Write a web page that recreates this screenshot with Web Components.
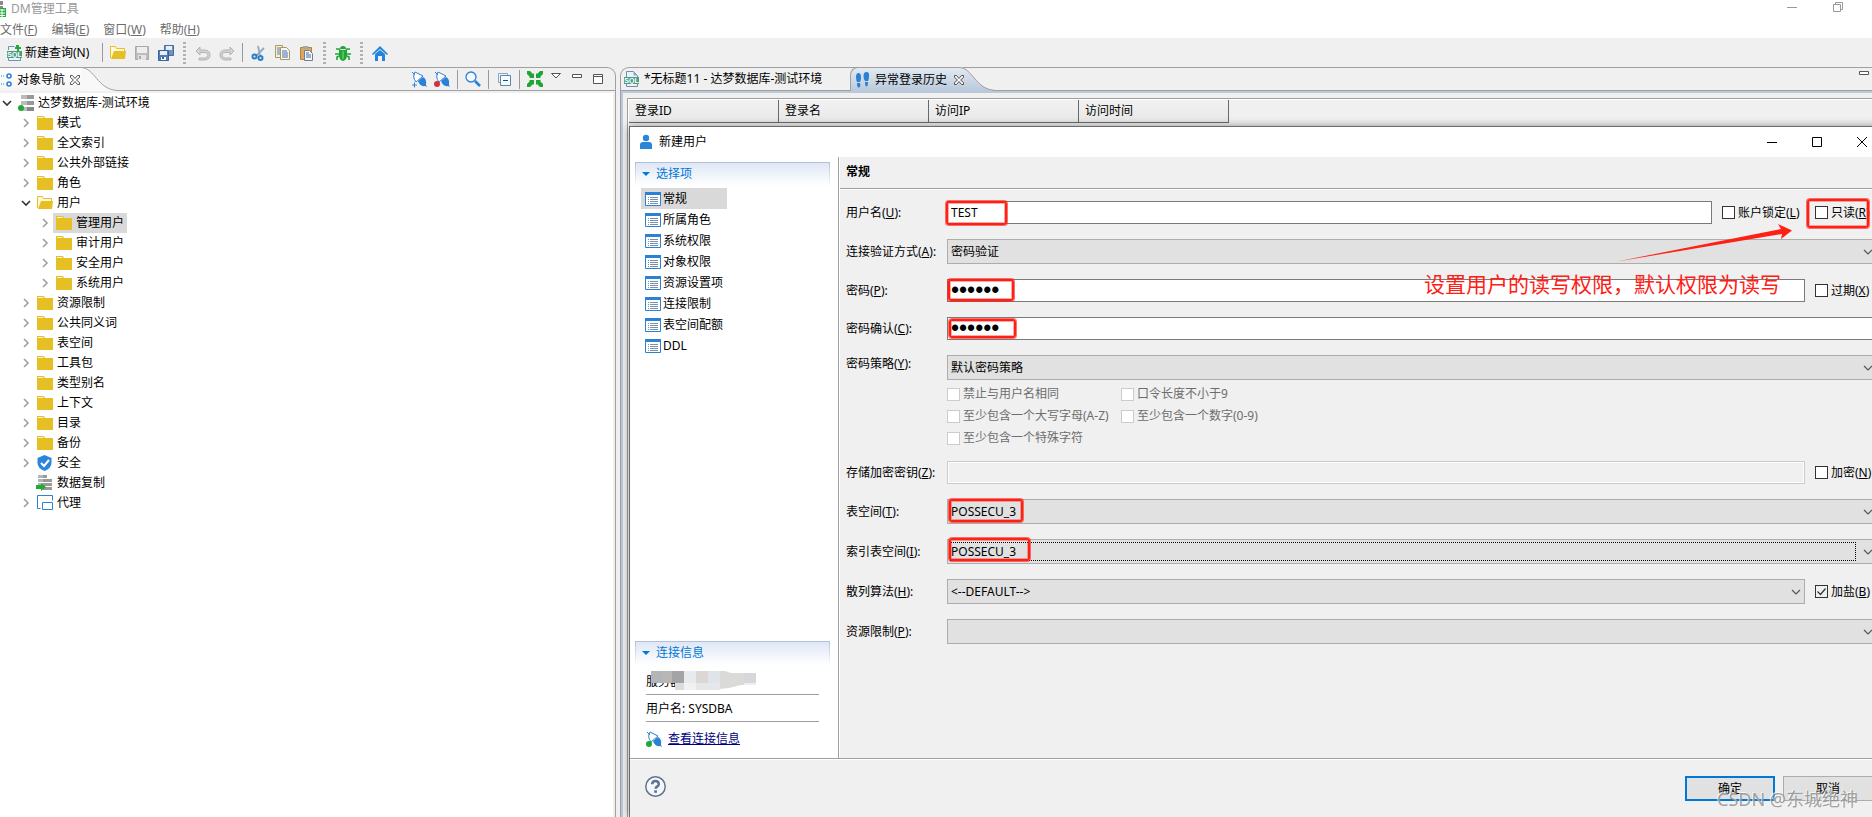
<!DOCTYPE html>
<html lang="zh-CN">
<head>
<meta charset="utf-8">
<title>DM管理工具</title>
<style>
html,body{margin:0;height:100%;overflow:hidden}
body{font:12px/16px "Noto Sans","Noto Sans CJK SC",sans-serif;color:#000;background:#f0f0f0}
</style>
</head>
<body>
<dm-app></dm-app>
<script>
const ICONS={
server:'<rect x="3" y="0" width="13" height="4" fill="#999"/><rect x="3" y="6" width="13" height="4" fill="#999"/><rect x="3" y="12" width="13" height="4" fill="#888"/><path d="M3 0h6v4H3zM3 6h6v4H3zM3 12h6v4H3z" fill="#bbb"/><circle cx="3" cy="13" r="3" fill="#22a834"/>',
applogo:'<path d="M6 0h7v4H6zM6 5h7v3H6z" fill="#8a8a8a"/><path d="M7 7h9v9H7z" fill="#27ae3c"/><path d="M8 9h7M8 12h7M8 14.500h7M12 8v8" stroke="#fff"/>',
sqladd:'<path d="M2.500 5V1.500h6M14.500 9v-1M2.500 12v3.500h12V13" fill="none" stroke="#5f9bb5"/><path d="M1 6h15v7H1z" fill="#4a9c86"/><path d="M10 0h3v2h2v2h-2v2h-2V4H9V2h1z" fill="#22a834"/><text x="8.500" y="12" font-size="7" font-weight="700" text-anchor="middle" fill="#fff" font-family="Liberation Sans">SQL</text>',
sql:'<path d="M2.500 6V.5h7l4 4V6M2.500 12v3.500h11V12" fill="#eaf1f8" stroke="#6f8fb0"/><path d="M9.500.5v4h4z" fill="#8da9c9"/><path d="M0 6h15v7H0z" fill="#4a9c86"/><text x="7.500" y="12" font-size="7" font-weight="700" text-anchor="middle" fill="#fff" font-family="Liberation Sans">SQL</text>',
folder:'<path d="M0 1h7l1 2h8v12H0z" fill="#e6bf25"/><path d="M1 2h5l1 1H1z" fill="#fff6d0"/>',
open:'<path d="M.5 13V1.500h5l1 2h8V7" fill="#fff8dc" stroke="#e6bf25"/><path d="M4 6h12l-1 8H1z" fill="#e6bf25"/>',
save:'<path d="M1.500 1.500h13v13h-13z" fill="#bdbdbd" stroke="#aaa"/><path d="M3 2h10v6H3z" fill="#eee"/><path d="M4 10h8v5H4z" fill="#e4e4e4"/><path d="M5 11h2v3H5z" fill="#aaa"/>',
saveall:'<path d="M6.500.5h9v10h-9z" fill="#6b93c4" stroke="#456fa3"/><path d="M8 1h6v4H8z" fill="#e8eef6"/><path d="M.5 5.500h10v10H.5z" fill="#4f7db5" stroke="#3a6397"/><path d="M2 6h7v4H2z" fill="#e8eef6"/><path d="M3 12h5v3H3z" fill="#fff"/><path d="M4 12h2v2H4z" fill="#3a6397"/>',
undo:'<path d="M5 2 1 6l4 4V7.500h5q3 0 3 2.500t-3 3H4v2h6q5-.5 5-5t-5-5H5z" fill="#d4d4d4" stroke="#aaa" stroke-width=".8"/>',
redo:'<path d="m11 2 4 4-4 4V7.500H6q-3 0-3 2.500t3 3h6v2H6q-5-.5-5-5t5-5h5z" fill="#d4d4d4" stroke="#aaa" stroke-width=".8"/>',
cut:'<path d="m8 1 2 9M14 3 6 11" stroke="#8fa9c4" stroke-width="1.800"/><circle cx="4.500" cy="11.500" r="2" fill="none" stroke="#2b7fc8" stroke-width="2"/><circle cx="10.500" cy="13" r="2" fill="none" stroke="#2b7fc8" stroke-width="2"/>',
copy:'<path d="M1.500.5h7v12h-7z" fill="#f7f0d4" stroke="#a89a63"/><path d="M3 3h4M3 5h4M3 7h4M3 9h4" stroke="#5b7ea8"/><path d="M6.500 2.500h6l3 3v9h-9z" fill="#f3f6fb" stroke="#a89a63"/><path d="M8 6h5M8 8h6M8 10h6M8 12h6" stroke="#4d6f9c"/>',
paste:'<path d="M2.500 2.500h11v12h-11z" fill="#dba765" stroke="#b57f3c"/><path d="M5 1h5v3H5z" fill="#a7a7a7"/><path d="M6.500 5.500h5l3 3v7h-8z" fill="#f3f6fb" stroke="#6d7f99"/><path d="M8 8h3M8 10h5M8 12h5" stroke="#4d6f9c"/>',
bug:'<path d="M1 4h3l1 1M15 4h-3l-1 1M0 9h16M2 15v-3l2-1M14 15v-3l-2-1" stroke="#1fa535" stroke-width="1.600" fill="none"/><path d="M5 4q0-3 3-3t3 3zM4 5h8v5q0 5-4 6-4-1-4-6z" fill="#1fa535"/><path d="M8 6v8" stroke="#7fdc8b"/>',
home:'<path d="M0 9 8 1l8 8-1 1-7-6-7 6z" fill="#2484dc"/><path d="m3 9 5-4 5 4v7h-3v-5H6v5H3z" fill="#2484dc"/>',
nav:'<path d="M0 4h8M0 12h8" stroke="#2b82d4" stroke-dasharray="1 1"/><circle cx="12" cy="4" r="2" fill="none" stroke="#2b82d4" stroke-width="1.600"/><circle cx="12" cy="12" r="2" fill="none" stroke="#2b82d4" stroke-width="1.600"/>',
plugadd:'<path d="m1 1 3 3M4 1l8 4-7 6Q1 6 4 1z" fill="#fff" stroke="#2b82d4"/><path d="m7 10 5-4q4 2 3 8l1 2-2-1q-5 1-7-5z" fill="#2b82d4"/><path d="M1 14h5M3.500 11.500v5" stroke="#2b82d4"/>',
plugoff:'<path d="m1 1 3 3M4 1l8 4-7 6Q1 6 4 1z" fill="#fff" stroke="#2b82d4"/><path d="m7 10 5-4q4 2 3 8l1 2-2-1q-5 1-7-5z" fill="#2b82d4"/><circle cx="3" cy="13" r="3" fill="#cf3240"/>',
plugon:'<path d="m1 1 3 3M4 1l8 4-7 6Q1 6 4 1z" fill="#fff" stroke="#2b82d4"/><path d="m7 10 5-4q4 2 3 8l1 2-2-1q-5 1-7-5z" fill="#2b82d4"/><circle cx="3" cy="13" r="3" fill="#22a834"/>',
search:'<circle cx="6" cy="6" r="5" fill="#f4f9fd" stroke="#2b82d4" stroke-width="1.300"/><path d="m10 10 5 5" stroke="#2b82d4" stroke-width="2.600"/>',
collapse:'<path d="M2.500 2.500h9v9h-9z" fill="#eef4fa" stroke="#8aa5c0"/><path d="M4.500 4.500h10v10h-10z" fill="#f6fafd" stroke="#5b87ad"/><path d="M7 9.500h5" stroke="#1c4f86"/>',
green:'<path d="M0 0h3l3 3 1-1v5H2l1-1-3-3zM16 0v3l-3 3 1 1H9V2l1 1 3-3zM0 16v-3l3-3-1-1h5v5l-1-1-3 3zM16 16h-3l-3-3-1 1V9h5l-1 1 3 3z" fill="#1fa535"/>',
steps:'<path d="M1 5q0-4 2.500-4T6 5q0 4-1 5H2Q1 8 1 5zM8.500 4q0-4 3-4T14 4q0 3-1 5h-3q-1.500-2-1.500-5z" fill="#2b82d4"/><path d="M2 11h3q1 4-1 4.500T2 11zM10 10h3q0 4.500-1.500 4.500T10 10z" fill="#2b82d4"/>',
user:'<circle cx="8" cy="4" r="3.200" fill="#2b86da"/><path d="M2 15v-4q0-3 3-3h6q3 0 3 3v4z" fill="#2b86da"/>',
list:'<path d="M.5 1.500h15v13H.5z" fill="#fff" stroke="#2b82d4"/><path d="M0 1h16v3H0z" fill="#2b82d4"/><path d="M3 6.500h1m1 0h8M3 8.500h1m1 0h8M3 10.500h1m1 0h8M3 12.500h1m1 0h8" stroke="#7790ab"/>',
shield:'<path d="m7.500 0 7 3v5q0 5-7 8-7-3-7-8V3z" fill="#2b86da"/><path d="m4 8 3 3 5-6" fill="none" stroke="#fff" stroke-width="2"/>',
replica:'<path d="M1 0h9v3H1zM1 4h14v3H1zM1 8h14v3H1zM6 12h9v3H6z" fill="#999"/><path d="M1 0h5v3H1zM1 4h5v3H1zM1 8h5v3H1z" fill="#b5b5b5"/><path d="M-1 10h5V8l5 4-5 4v-2h-5z" fill="#22a834"/>',
agent:'<path d="M3.500 13.500h-3V.5h15v5" fill="none" stroke="#2b82d4"/><path d="M5.500 7.500h10v7h-10z" fill="#fff" stroke="#2b82d4"/>',
x:'<path d="M3.500 3.500h2l2.500 3 2.500-3h2v2L9.500 8l3 2.500v2h-2L8 9.500l-2.500 3h-2v-2l3-2.500-3-2.500z" fill="#fff" stroke="#555"/>',
help:'<circle cx="8" cy="8" r="7.400" fill="#f4f7fb" stroke="#5f7290" stroke-width="1.100"/><path d="M5.500 6.300q0-2.500 2.500-2.500t2.500 2.500q0 1-1.500 2-.9.600-.9 1.500" fill="none" stroke="#5f7290" stroke-width="1.900"/><path d="M7 10.900h2.100v1.900H7z" fill="#5f7290"/>',
menu:'<path d="M3.500 2.500h9L8 7z" fill="#fff" stroke="#555"/>',
min:'<path d="M3.500 3.500h9v3h-9z" fill="#fff" stroke="#555"/>',
max:'<path d="M3.500 3.500h9v9h-9zM3.500 5.500h9" fill="#fff" stroke="#555"/>',
wmin:'<path d="M3 8.500h10" stroke="currentColor"/>',
wmax:'<path d="M3.500 3.500h9v9h-9z" fill="none" stroke="currentColor"/>',
wrestore:'<path d="M3.500 5.500h7v7h-7zM5.500 5.500v-2h7v7h-2" fill="none" stroke="currentColor"/>',
wclose:'<path d="m3 3 10 10M13 3 3 13" stroke="currentColor"/>'
};
const define=(name,css,html)=>customElements.define(name,class extends HTMLElement{
  connectedCallback(){
    if(this.shadowRoot)return;
    const root=this.attachShadow({mode:'open'});
    const t=document.createElement('template');
    t.innerHTML=`<style>:host{box-sizing:border-box}*{box-sizing:border-box}button,input,select{font:inherit;color:inherit}button{border:0;background:none;padding:0;margin:0;display:flex;align-items:center}${css}</style>${typeof html==='function'?html(this):html}`;
    root.append(t.content.cloneNode(true));
  }
});
const attr=(e,n)=>e.getAttribute(n)||'';
const keyed=e=>attr(e,'label')+(attr(e,'key')?`(<u>${attr(e,'key')}</u>)`:'');

define('ui-icon',':host{display:block;flex:none;width:var(--size,16px);height:var(--size,16px)}svg{display:block;width:100%;height:100%;overflow:visible}',
  e=>`<svg viewBox="0 0 16 16" aria-hidden="true">${ICONS[attr(e,'name')]}</svg>`);
define('tool-button',':host{display:block;flex:none}button{gap:3px;height:24px;padding:0 var(--pad,4px)}',
  e=>`<button type="button" aria-label="${attr(e,'label')}"><ui-icon name="${attr(e,'icon')}"></ui-icon><slot></slot></button>`);
define('tool-sep',':host{display:block;flex:none;width:1px;height:19px;background:#999;margin:0 3px}:host([dotted]){height:22px;width:3px;margin:0 5px;background:repeating-linear-gradient(#b0b0b0 0 2px,transparent 2px 4px)}','');

define('title-bar',':host{display:flex;justify-content:space-between;height:18px;color:#999;background:#fff;padding-right:26px}h1{display:flex;gap:5px;margin:1px 0 0 -10px;font:inherit}.w{display:flex;gap:30px}.w button{height:14px}',
  `<h1><ui-icon name="applogo"></ui-icon>DM管理工具</h1><div class="w"><button aria-label="最小化"><ui-icon name="wmin"></ui-icon></button><button aria-label="还原"><ui-icon name="wrestore"></ui-icon></button></div>`);
define('menu-bar',':host{display:flex;gap:14px;height:20px;align-items:center;background:#fff;color:#6d6d6d;padding-top:4px}button{flex:none;line-height:16px}button:first-child{margin-left:-5px}',
  [['文件','F'],['编辑','E'],['窗口','W'],['帮助','H']].map(([a,b])=>`<button type="button"><span>${a}(<u>${b}</u>)</span></button>`).join(''));
define('tool-bar',':host{display:flex;align-items:center;height:29px;background:#f0f0f0}.first{--pad:6px;margin-right:4px}',
  `<tool-button class="first" icon="sqladd" label="新建查询">新建查询(N)</tool-button><tool-sep></tool-sep>
  <tool-button icon="open" label="打开"></tool-button><tool-button icon="save" label="保存"></tool-button><tool-button icon="saveall" label="全部保存"></tool-button><tool-sep dotted></tool-sep>
  <tool-button icon="undo" label="撤销"></tool-button><tool-button icon="redo" label="重做"></tool-button><tool-sep></tool-sep>
  <tool-button icon="cut" label="剪切"></tool-button><tool-button icon="copy" label="复制"></tool-button><tool-button icon="paste" label="粘贴"></tool-button><tool-sep dotted></tool-sep>
  <tool-button icon="bug" label="调试"></tool-button><tool-sep dotted></tool-sep><tool-button icon="home" label="主页"></tool-button>`);

define('tree-item',`:host{display:block}.row{display:flex;align-items:center;height:20px;padding-left:calc(var(--level,0)*19px)}
  .tw{width:16px;height:16px;flex:none;margin-right:2px}.tw svg{display:block}.name{display:flex;align-items:center;gap:4px;height:20px;padding-right:3px}
  :host([selected]) .name{background:#d9d9d9;margin-left:-3px;padding-left:3px}`,
  e=>`<div class="row"><span class="tw">${e.hasAttribute('leaf')?'':e.hasAttribute('open')?'<svg width="16" height="16"><path d="m3 6 4 4 4-4" fill="none" stroke="#333" stroke-width="1.600"/></svg>':'<svg width="16" height="16"><path d="m5 4 4 4-4 4" fill="none" stroke="#a0a0a0" stroke-width="1.600"/></svg>'}</span><span class="name"><ui-icon name="${attr(e,'icon')||'folder'}"></ui-icon>${attr(e,'label')}</span></div><slot></slot>`);

const endCurve=(fill)=>`<svg class="curve" width="36" height="24" viewBox="0 0 36 24" aria-hidden="true"><path d="M0 0C14 0 16 22 36 23V24H0z" fill="${fill}"/><path d="M0 0.500C14 1 16 22 36 23.500" fill="none" stroke="#a0a0a0"/></svg>`;

define('nav-pane',`:host{display:flex;flex-direction:column;flex:0 0 616px;border:1px solid #a0a0a0;border-width:1px 1px 0 0;border-top-right-radius:9px;overflow:hidden}
  header{display:flex;height:23px;flex:none}.tab{display:flex;align-items:center;flex:none;height:23px;background:linear-gradient(#fff,#f4f4f4);gap:4px;white-space:nowrap}
  .tab ui-icon:first-child{margin-left:-3px}.tab button{margin-left:1px}.curve{margin:-1px 0 0 -2px;flex:none}.bar{flex:1;display:flex;align-items:center;justify-content:flex-end;border-bottom:1px solid #a0a0a0;padding-right:9px;--pad:0}
  .bar tool-button{margin:0 3px}.bar tool-button+tool-button{margin-left:4px}.bar tool-sep{margin:0 4px}.win{display:flex;gap:5px;margin-left:2px}.tree{flex:1;background:#fff;margin:2px 2px 0 0}`,
  `<header><div class="tab"><ui-icon name="nav"></ui-icon><span>对象导航</span><button aria-label="关闭"><ui-icon name="x"></ui-icon></button></div>${endCurve('#f8f8f8')}
  <div class="bar"><tool-button icon="plugadd" label="新建连接"></tool-button><tool-button icon="plugoff" label="断开连接"></tool-button><tool-sep></tool-sep><tool-button icon="search" label="查找"></tool-button><tool-sep></tool-sep><tool-button icon="collapse" label="全部折叠"></tool-button><tool-sep></tool-sep><tool-button icon="green" label="链接"></tool-button>
  <div class="win"><button aria-label="菜单"><ui-icon name="menu"></ui-icon></button><button aria-label="最小化"><ui-icon name="min"></ui-icon></button><button aria-label="最大化"><ui-icon name="max"></ui-icon></button></div></div></header>
  <div class="tree"><tree-item open icon="server" label="达梦数据库-测试环境"><div style="--level:1">
  ${['模式','全文索引','公共外部链接','角色'].map(n=>`<tree-item label="${n}"></tree-item>`).join('')}
  <tree-item open icon="open" label="用户"><div style="--level:2"><tree-item selected label="管理用户"></tree-item>${['审计用户','安全用户','系统用户'].map(n=>`<tree-item label="${n}"></tree-item>`).join('')}</div></tree-item>
  ${['资源限制','公共同义词','表空间','工具包'].map(n=>`<tree-item label="${n}"></tree-item>`).join('')}<tree-item leaf label="类型别名"></tree-item>
  ${['上下文','目录','备份'].map(n=>`<tree-item label="${n}"></tree-item>`).join('')}<tree-item icon="shield" label="安全"></tree-item><tree-item leaf icon="replica" label="数据复制"></tree-item><tree-item icon="agent" label="代理"></tree-item>
  </div></tree-item></div>`);

define('red-mark',':host{position:absolute;pointer-events:none;border:2px solid #ff2015;border-radius:3px;box-shadow:0 0 0 1px #ff2015a0,inset 0 0 0 1px #ff201560;z-index:2}','');

define('check-box',`:host{display:block;flex:none;white-space:nowrap}label{display:flex;align-items:center;gap:3px}
  input{appearance:none;width:13px;height:13px;margin:0;border:1px solid #333;background:#fff;flex:none}
  input:checked{background:url('data:image/svg+xml,<svg xmlns="http://www.w3.org/2000/svg" viewBox="0 0 11 11"><path d="m1.500 5.500 3 3 5-6" fill="none" stroke="%23333" stroke-width="1.200"/></svg>')}
  input:disabled{border-color:#ccc}:host([disabled]){color:#6d6d6d}`,
  e=>`<label><input type="checkbox"${e.hasAttribute('checked')?' checked':''}${e.hasAttribute('disabled')?' disabled':''}><span>${keyed(e)}</span></label>`);

const rowCss=`:host{display:flex;align-items:center}:host([top]){align-items:flex-start}label{flex:0 0 101px}:host([top]) label{padding-top:1px}.field{flex:1;position:relative;min-width:0}
  ::slotted(check-box){margin-left:10px;flex:0 0 62px}::slotted(check-box.wide){flex-basis:83px}`;
define('text-row',rowCss+`input{display:block;width:100%;height:23px;border:1px solid #7a7a7a;border-radius:0;background:#fff;padding:0 3px;outline:0}
  input[type=password]{font:23px/21px "Liberation Sans",sans-serif}input:disabled{background:#f0f0f0;border-color:#ccc;box-shadow:inset 0 0 0 1px #fff}`,
  e=>`<label for="c">${keyed(e)}:</label><div class="field"><input id="c" type="${attr(e,'type')||'text'}" value="${attr(e,'value')}"${e.hasAttribute('disabled')?' disabled':''}><slot name="mark"></slot></div><slot></slot>`);
define('select-row',rowCss+`select{appearance:none;display:block;width:100%;height:25px;border:1px solid #adadad;border-radius:0;background:#e1e1e1;padding:0 24px 0 3px;outline:0}
  .v{position:absolute;right:4px;top:8px}.focus{position:absolute;inset:3px 21px 3px 3px;border:1px dotted #000;pointer-events:none}`,
  e=>`<label for="c">${keyed(e)}:</label><div class="field"><select id="c"><option>${attr(e,'value')}</option></select><svg class="v" width="10" height="10"><path d="m1 3 4 4 4-4" fill="none" stroke="#555" stroke-width="1.200"/></svg>${e.hasAttribute('focused')?'<div class="focus"></div>':''}<slot name="mark"></slot><slot name="below"></slot></div><slot></slot>`);

define('nav-section',`:host{display:block}h2{margin:0;display:flex;align-items:center;gap:6px;height:24px;padding:0 0 1px 6px;font:inherit;color:#0078d7;border:1px solid;border-bottom:0;border-color:#aebfdc;border-image:linear-gradient(#aebfdc,#fff) 1;background:linear-gradient(#dfe7f4,#fff)}`,
  e=>`<h2><svg width="8" height="5"><path d="M0 0h8L4 4z" fill="#0078d7"/></svg>${attr(e,'label')}</h2><slot></slot>`);

define('dialog-side',`:host{display:flex;flex-direction:column;justify-content:space-between;flex:0 0 209px;background:#fff;border-right:1px solid #a0a0a0;padding:5px 8px 3px 5px}
  nav{margin:2px 0 0 6px}nav button{width:86px;height:21px;gap:2px;padding-left:4px}nav button[aria-current]{background:#d9d9d9}
  .info{margin:0 11px;padding-top:3px}.line{position:relative;height:27px;padding:6px 0 4px;border-bottom:1px solid #a0a0a0}
  .mosaic{position:absolute;left:5px;top:3px}.link{display:flex;gap:6px;align-items:center;height:33px}a{color:#00007f}`,
  `<nav-section label="选择项"><nav>${['常规','所属角色','系统权限','对象权限','资源设置项','连接限制','表空间配额','DDL'].map((n,i)=>`<button type="button"${i?'':' aria-current="page"'}><ui-icon name="list"></ui-icon>${n}</button>`).join('')}</nav></nav-section>
  <nav-section label="连接信息"><div class="info"><div class="line">服务器<svg class="mosaic" width="105" height="19" aria-hidden="true"><path d="M0 0h12v12H0z" fill="#b4b5b6"/><path d="M12 0h9v12h-9z" fill="#b9b7b6"/><path d="M21 0h12v12H21z" fill="#a3a4a6"/><path d="M33 0h12v12H33z" fill="#e8ebeb"/><path d="M45 0h12v12H45z" fill="#dcd7d4"/><path d="M57 0h12v12H57z" fill="#dfe4e8"/><path d="M69 0h5l6 2h13v12h-3l-12 3-9 1z" fill="#dadad9"/><path d="M93 2h12v10H93z" fill="#d6d7d9"/><path d="M24 12h9v7h-9z" fill="#dcdcdc"/><path d="M33 12h12v7H33z" fill="#f0f2f1"/><path d="M45 12h24v7H45z" fill="#e6e7e8"/><path d="M93 12h12v2H93z" fill="#eee"/></svg></div>
  <div class="line">用户名: SYSDBA</div><div class="link"><ui-icon name="plugon"></ui-icon><a href="#info">查看连接信息</a></div></div></nav-section>`);

define('user-form',`:host{display:block;flex:1;min-width:0;position:relative;margin-left:1px;background:#f0f0f0}h2{margin:0;height:33px;padding:7px 6px;font-size:12px;line-height:16px;border-bottom:1px solid #fff;box-shadow:inset 0 -1px #a0a0a0}
  form{display:flex;flex-direction:column;gap:15px;padding:11px 7px 0 6px}.rules{display:grid;grid-template-columns:174px 1fr;grid-auto-rows:18px;row-gap:4px;align-items:center;padding-top:5px;margin-bottom:-1px}
  .note{position:absolute;right:103px;top:114px;color:#ff2015;font-size:21px;line-height:26px;white-space:nowrap}.arrow{position:absolute;right:92px;top:67px}`,
  `<h2>常规</h2><form>
  <text-row label="用户名" key="U" value="TEST"><red-mark slot="mark" style="left:-1px;top:0;width:61px;height:24px"></red-mark><check-box class="wide" label="账户锁定" key="L"></check-box><div style="position:relative"><check-box label="只读" key="R" style="width:62px;margin-left:10px"></check-box><red-mark style="left:2px;top:-6px;width:62px;height:29px"></red-mark></div></text-row>
  <select-row label="连接验证方式" key="A" value="密码验证"></select-row>
  <text-row label="密码" key="P" type="password" value="111111"><red-mark slot="mark" style="left:1px;top:0;width:66px;height:22px"></red-mark><check-box label="过期" key="X"></check-box></text-row>
  <text-row label="密码确认" key="C" type="password" value="111111"><red-mark slot="mark" style="left:2px;top:2px;width:67px;height:19px"></red-mark></text-row>
  <select-row top label="密码策略" key="Y" value="默认密码策略"><div class="rules" slot="below"><check-box disabled label="禁止与用户名相同"></check-box><check-box disabled label="口令长度不小于9"></check-box><check-box disabled label="至少包含一个大写字母(A-Z)"></check-box><check-box disabled label="至少包含一个数字(0-9)"></check-box><check-box disabled label="至少包含一个特殊字符"></check-box></div></select-row>
  <text-row disabled label="存储加密密钥" key="Z"><check-box label="加密" key="N"></check-box></text-row>
  <select-row label="表空间" key="T" value="POSSECU_3"><red-mark slot="mark" style="left:2px;top:0;width:74px;height:23px"></red-mark></select-row>
  <select-row focused label="索引表空间" key="I" value="POSSECU_3"><red-mark slot="mark" style="left:2px;top:-1px;width:81px;height:23px"></red-mark></select-row>
  <select-row label="散列算法" key="H" value="&amp;lt;--DEFAULT--&amp;gt;"><check-box checked label="加盐" key="B"></check-box></select-row>
  <select-row label="资源限制" key="P" value=""></select-row></form>
  <svg class="arrow" width="175" height="38" aria-hidden="true"><path d="M0 37.500 164 5l-3-5 14 6.500L164 15l1-5z" fill="#ff2015"/></svg><div class="note">设置用户的读写权限，默认权限为读写</div>`);

define('new-user-dialog',`:host{position:absolute;left:8px;top:58px;right:-13px;bottom:0;display:flex;flex-direction:column;background:#fff;border:1px solid #6b6b6b;border-bottom:0;box-shadow:0 0 8px #0006}
  header{display:flex;align-items:center;height:30px;padding-left:8px;flex:none}h1{font:inherit;margin:0 auto 0 5px}.w{display:flex}.w button{width:45px;justify-content:center}
  .body{display:flex;flex:1;min-height:0}footer{flex:none;display:flex;align-items:flex-start;gap:8px;height:59px;padding:17px 11px 0 16px;background:#f0f0f0;border-top:1px solid #a0a0a0;box-shadow:inset 0 1px #fff}
  .help{--size:21px;margin:0 auto 0 -1px}.btn{width:90px;height:25px;justify-content:center;background:#e1e1e1;border:1px solid #adadad}.ok{border:2px solid #0078d7}`,
  `<header><ui-icon name="user"></ui-icon><h1>新建用户</h1><div class="w"><button aria-label="最小化"><ui-icon name="wmin"></ui-icon></button><button aria-label="最大化"><ui-icon name="wmax"></ui-icon></button><button aria-label="关闭"><ui-icon name="wclose"></ui-icon></button></div></header>
  <div class="body"><dialog-side></dialog-side><user-form></user-form></div>
  <footer><button class="help" aria-label="帮助"><ui-icon name="help"></ui-icon></button><button class="btn ok">确定</button><button class="btn">取消</button></footer>`);

define('editor-pane',`:host{display:flex;flex-direction:column;flex:1;min-width:0;position:relative;border:1px solid #a0a0a0;border-width:1px 0 0 1px;border-top-left-radius:9px}
  header{display:flex;height:23px;flex:none;white-space:nowrap}.tab{display:flex;align-items:center;gap:4px;flex:none}.one{width:229px;padding-left:3px;border-bottom:1px solid #a0a0a0}
  .two{width:117px;margin-top:-1px;height:24px;padding-left:4px;background:linear-gradient(#e3eaf2,#b9c9da);border-left:1px solid #a0a0a0;border-top:1px solid #a0a0a0;border-top-left-radius:8px}
  .curve{margin:-1px 0 0 -8px;flex:none}.two button{position:relative;z-index:1}.rest{flex:1;display:flex;justify-content:flex-end;border-bottom:1px solid #a0a0a0}
  .curve linearGradient{display:block}
  .frame{flex:1;border:2px solid #b9c9da;border-width:2px 0 0 2px;padding:5px 0 0 4px}.grid{height:100%;border:1px solid #a0a0a0;border-width:1px 0 0 1px;box-shadow:inset 1px 1px #fff;padding:1px 0 0 1px}
  table{border-collapse:separate;border-spacing:0;table-layout:fixed;width:600px}th{font:inherit;text-align:left;height:23px;padding:0 6px;background:linear-gradient(#f2f2f2,#e8e8e8);border:1px solid #696969;border-width:0 1px 1px 0}
  .rest button{height:12px;margin-top:2px}`,
  `<header><div class="tab one"><ui-icon name="sql"></ui-icon><span>*无标题11 - 达梦数据库-测试环境</span></div><div class="tab two"><ui-icon name="steps"></ui-icon><span>异常登录历史</span><button aria-label="关闭"><ui-icon name="x"></ui-icon></button></div>${endCurve('url(#tabfill)').replace('<path','<linearGradient id="tabfill" x1="0" y1="0" x2="0" y2="1"><stop stop-color="#e3eaf2"/><stop offset="1" stop-color="#b9c9da"/></linearGradient><path')}<div class="rest"><button aria-label="最小化"><ui-icon name="min"></ui-icon></button></div></header>
  <div class="frame"><div class="grid"><table><thead><tr><th>登录ID</th><th>登录名</th><th>访问IP</th><th>访问时间</th></tr></thead></table></div></div><new-user-dialog></new-user-dialog>`);

define('dm-app',`:host{display:flex;flex-direction:column;height:100vh;overflow:hidden;position:relative}main{display:flex;gap:4px;flex:1;min-height:0}
  .mark{position:absolute;right:14px;bottom:5px;font-size:18px;line-height:26px;color:#8a8a8acc;text-shadow:-1px -1px #ffffffb0;pointer-events:none;z-index:5}`,
  `<title-bar></title-bar><menu-bar></menu-bar><tool-bar></tool-bar><main><nav-pane></nav-pane><editor-pane></editor-pane></main><div class="mark">CSDN @东城绝神</div>`);
</script>
</body>
</html>
